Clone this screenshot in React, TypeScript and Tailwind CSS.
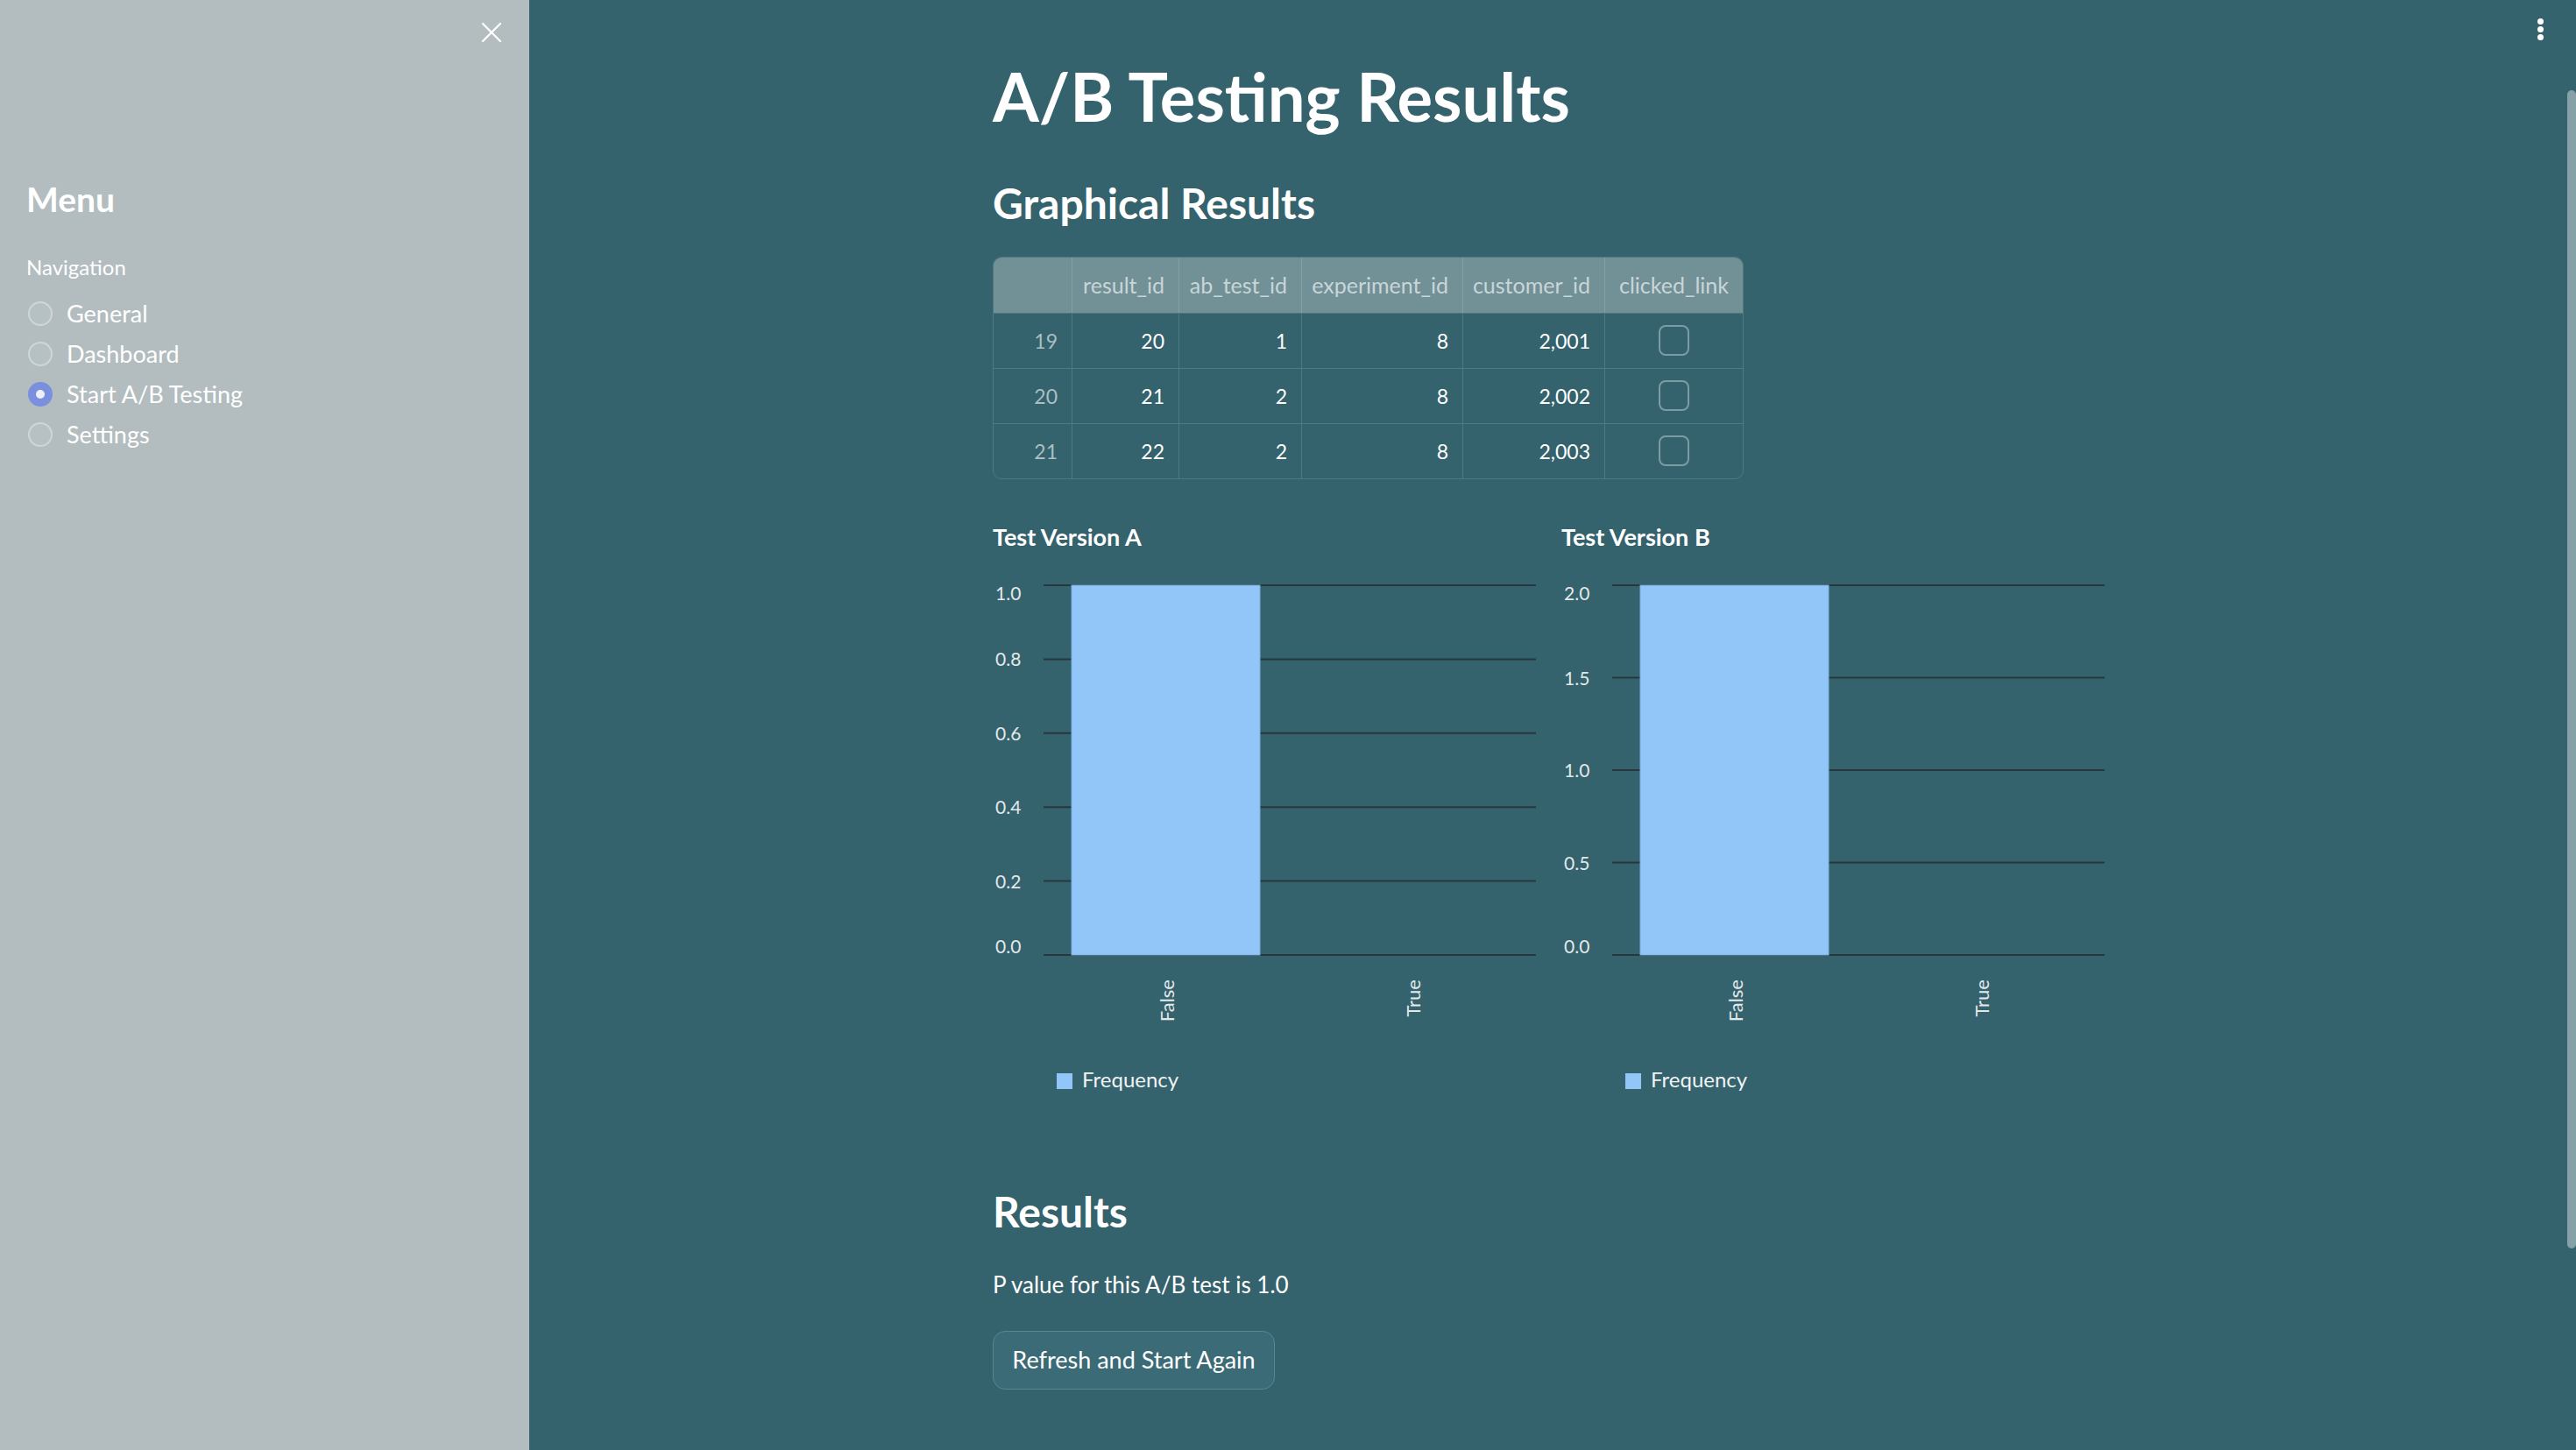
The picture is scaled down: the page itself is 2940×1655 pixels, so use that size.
import { X } from "lucide-react";

const navItems = ["General", "Dashboard", "Start A/B Testing", "Settings"];

const rows = [
  { idx: 19, resultId: 20, abTestId: 1, experimentId: 8, customerId: "2,001" },
  { idx: 20, resultId: 21, abTestId: 2, experimentId: 8, customerId: "2,002" },
  { idx: 21, resultId: 22, abTestId: 2, experimentId: 8, customerId: "2,003" },
];

const headers = ["", "result_id", "ab_test_id", "experiment_id", "customer_id", "clicked_link"];

type ChartProps = {
  title: string;
  ticks: number[];
  max: number;
  value: number;
};

const BarChart = ({ title, ticks, max, value }: ChartProps) => {
  const top = 13;
  const bottom = 435;
  const y = (v: number) => top + (1 - v / max) * (bottom - top);

  return (
    <div className="flex flex-col">
      <div className="text-[27px] leading-[1.2] font-bold text-white">{title}</div>
      <svg width="620" height="600" className="mt-[26px]" fontFamily="Lato, sans-serif">
        {ticks.map((t, i) => {
          const ly = y(t);
          const base = i === ticks.length - 1 ? 30 : i === 0 ? 433 : ly + 8;
          return (
            <g key={t}>
              <line x1="58" x2="620" y1={ly} y2={ly} stroke="#27373d" strokeWidth="2" />
              <text x="3" y={base} fontSize="21" fill="#e2e8ea">
                {t.toFixed(1)}
              </text>
            </g>
          );
        })}
        <rect x="90" y={y(value)} width="215" height={bottom - y(value)} fill="#93c6f8" stroke="#7aaedf" strokeWidth="1" />
        <text transform="translate(207 463) rotate(-90)" textAnchor="end" fontSize="22" fill="#e2e8ea">
          False
        </text>
        <text transform="translate(488 463) rotate(-90)" textAnchor="end" fontSize="22" fill="#e2e8ea">
          True
        </text>
        <rect x="73" y="570" width="18" height="18" fill="#93c6f8" />
        <text x="102" y="586" fontSize="24" fill="#f0f3f4">
          Frequency
        </text>
      </svg>
    </div>
  );
};

export default function App() {
  return (
    <div className="flex h-[1655px] w-full overflow-hidden font-['Lato',sans-serif] text-white">
      {/* sidebar */}
      <aside className="relative w-[604px] shrink-0 bg-[#b3bdbf] pl-[30px] pt-[204px]">
        <button className="absolute left-[541px] top-[17px] flex h-[40px] w-[40px] items-center justify-center text-white">
          <X size={40} strokeWidth={1.4} />
        </button>
        <h2 className="text-[39px] leading-[1.2] font-bold">Menu</h2>
        <div className="mt-[40px] text-[24px] leading-[1.2]">Navigation</div>
        <div className="mt-[15px] flex flex-col">
          {navItems.map((item) => {
            const active = item === "Start A/B Testing";
            return (
              <label key={item} className="flex h-[46px] items-center gap-[16px] pl-[2px]">
                {active ? (
                  <span className="flex h-[28px] w-[28px] items-center justify-center rounded-full bg-[#7b8fdf]">
                    <span className="h-[10px] w-[10px] rounded-full bg-[#eef0f8]" />
                  </span>
                ) : (
                  <span className="h-[28px] w-[28px] rounded-full border-2 border-[#cfd6d8] bg-[#b6c1c3]" />
                )}
                <span className="text-[27px] leading-none">{item}</span>
              </label>
            );
          })}
        </div>
      </aside>

      {/* main */}
      <main className="relative flex flex-1 justify-center bg-[#34626d] pr-[10px]">
        <div className="absolute right-[37px] top-[21px] flex flex-col gap-[2px]">
          <span className="h-[7px] w-[7px] rounded-full bg-white" />
          <span className="h-[7px] w-[7px] rounded-full bg-white" />
          <span className="h-[7px] w-[7px] rounded-full bg-white" />
        </div>
        <div className="absolute right-0 top-[103px] h-[1322px] w-[10px] rounded-full bg-[#86a2a8]" />

        <div className="flex w-[1268px] flex-col pt-[64px]">
          <h1 className="text-[76px] leading-[1.2] font-bold">A/B Testing Results</h1>
          <h3 className="mt-[48px] text-[48px] leading-[1.2] font-bold">Graphical Results</h3>

          <div className="mt-[32px] w-[857px] overflow-hidden rounded-[10px] border border-[#4f7a84]">
            <div className="grid h-[63px] grid-cols-[90px_122px_140px_184px_162px_157px] bg-[#729197] text-[25px] text-[#c9d5d8]">
              {headers.map((h, i) => (
                <div
                  key={i}
                  className={`flex items-center border-r border-[#83a0a6] px-[16px] last:border-r-0 ${
                    i === 5 ? "justify-center px-[12px]" : "justify-end"
                  }`}
                >
                  {h}
                </div>
              ))}
            </div>
            {rows.map((r) => (
              <div
                key={r.idx}
                className="grid h-[63px] grid-cols-[90px_122px_140px_184px_162px_157px] border-t border-[#4f7a84] text-[23px]"
              >
                <div className="flex items-center justify-end border-r border-[#4f7a84] px-[16px] text-[#a9bfc4]">{r.idx}</div>
                <div className="flex items-center justify-end border-r border-[#4f7a84] px-[16px]">{r.resultId}</div>
                <div className="flex items-center justify-end border-r border-[#4f7a84] px-[16px]">{r.abTestId}</div>
                <div className="flex items-center justify-end border-r border-[#4f7a84] px-[16px]">{r.experimentId}</div>
                <div className="flex items-center justify-end border-r border-[#4f7a84] px-[16px]">{r.customerId}</div>
                <div className="flex items-center justify-center">
                  <span className="h-[35px] w-[35px] rounded-[8px] border-2 border-[#7c9ca3]" />
                </div>
              </div>
            ))}
          </div>

          <div className="mt-[50px] grid grid-cols-[620px_620px] gap-[29px]">
            <BarChart title="Test Version A" ticks={[0, 0.2, 0.4, 0.6, 0.8, 1.0]} max={1} value={1} />
            <BarChart title="Test Version B" ticks={[0, 0.5, 1.0, 1.5, 2.0]} max={2} value={2} />
          </div>

          <h3 className="mt-[99px] text-[48px] leading-[1.2] font-bold">Results</h3>
          <p className="mt-[39px] text-[26px] leading-[1.2]">P value for this A/B test is 1.0</p>
          <div className="mt-[37px]">
            <button className="h-[67px] w-[322px] rounded-[14px] border border-[#5b8590] bg-[#3b6b76] text-[27px] text-white">
              Refresh and Start Again
            </button>
          </div>
        </div>
      </main>
    </div>
  );
}
